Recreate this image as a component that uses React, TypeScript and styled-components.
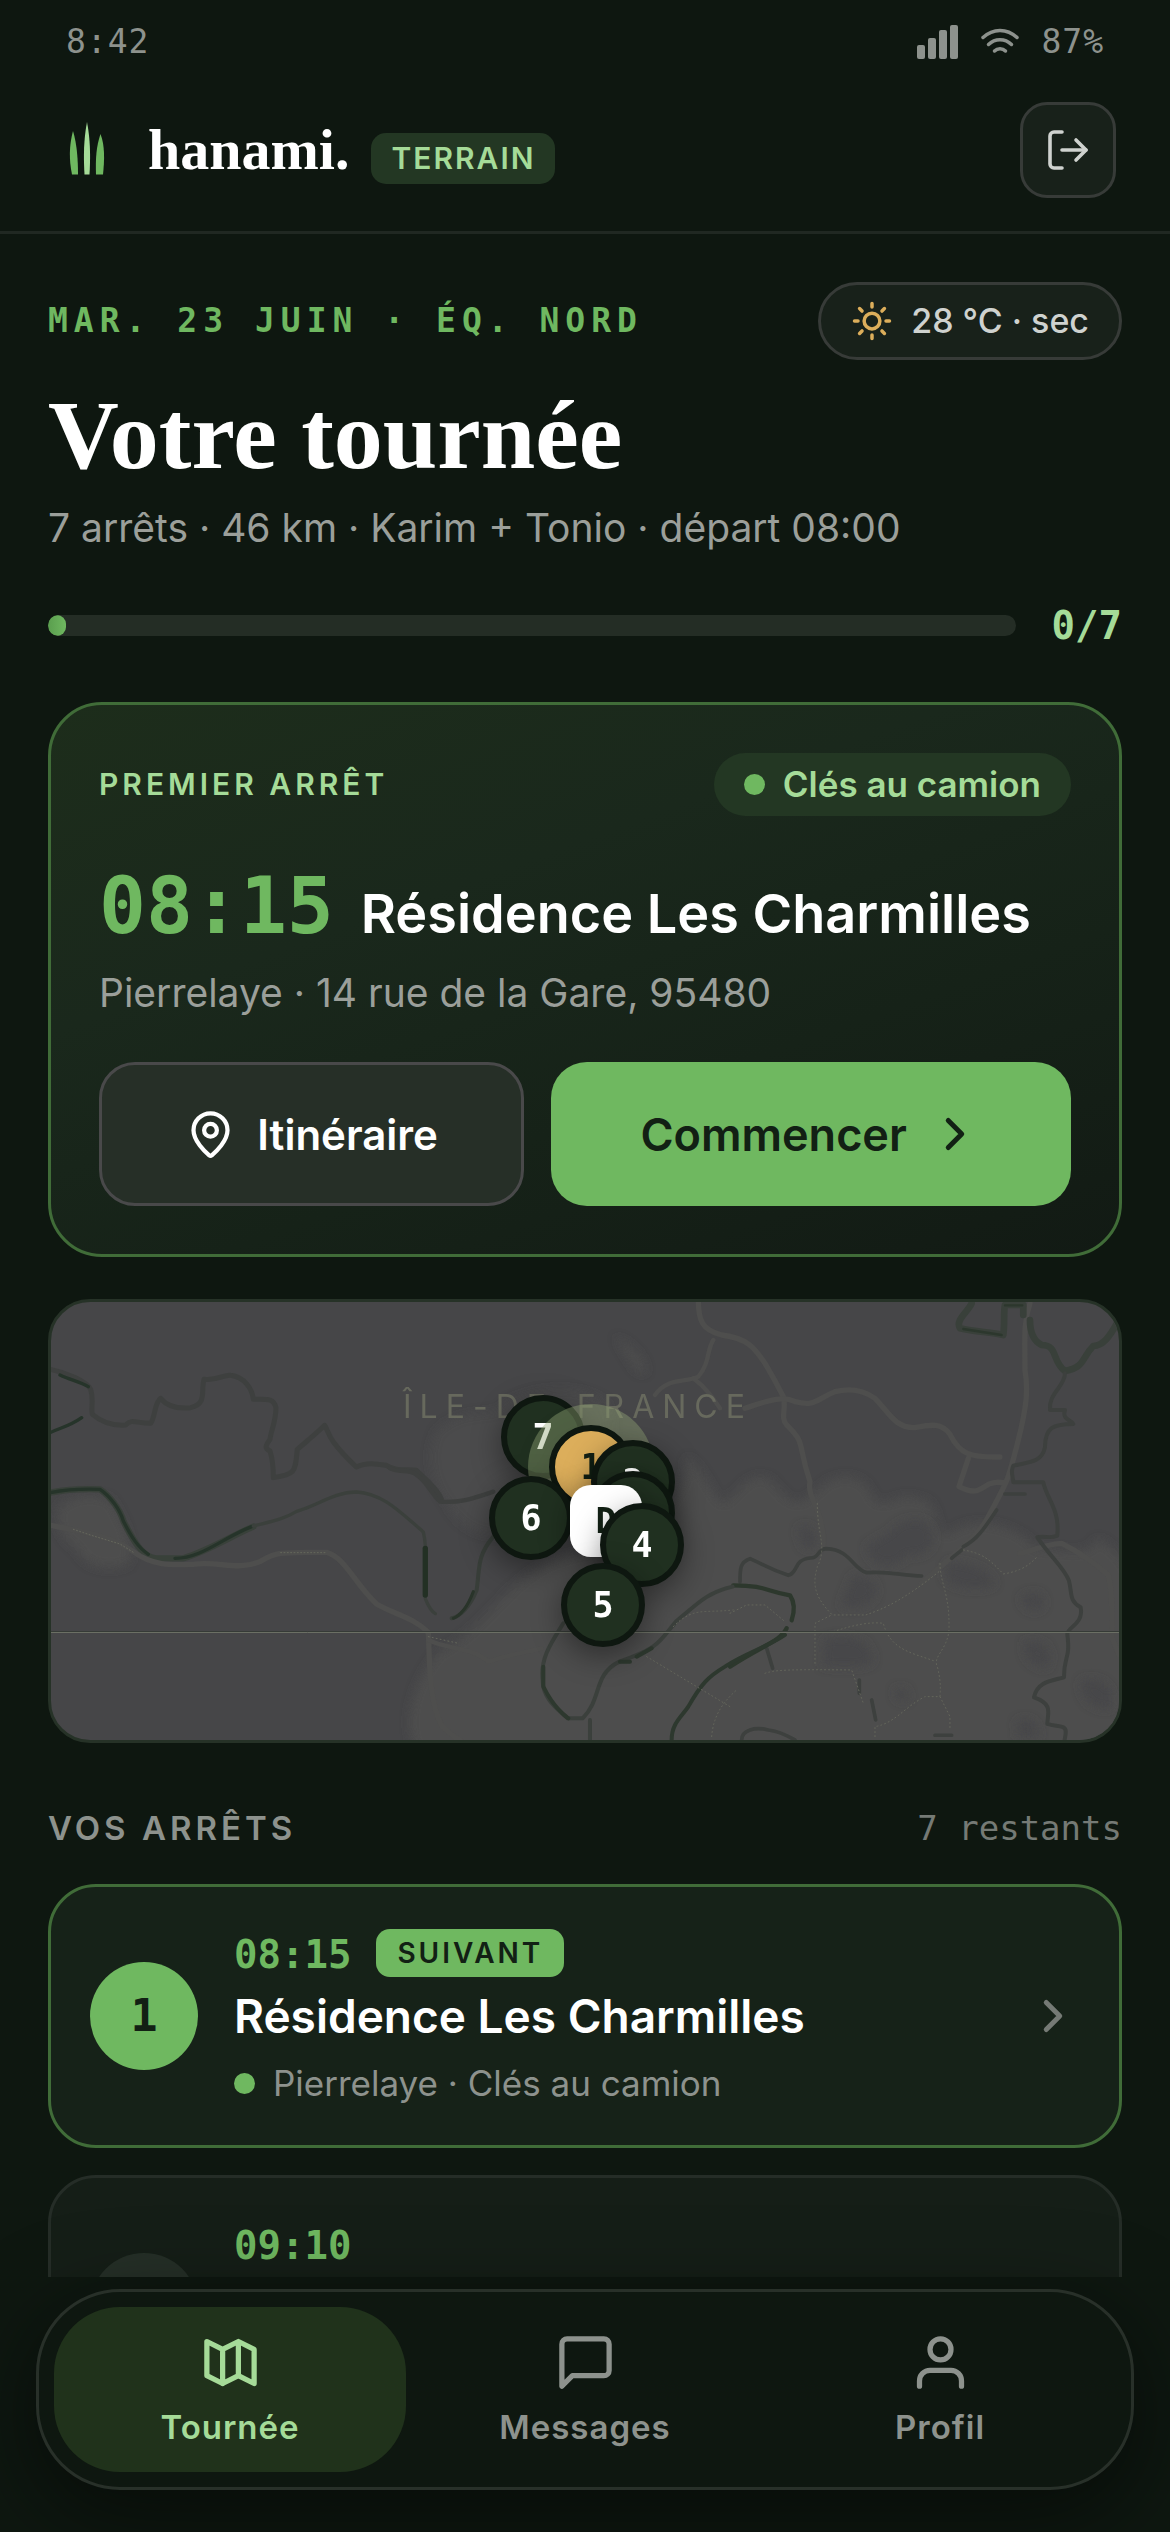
import React from "react";
import styled, { createGlobalStyle, css } from "styled-components";

const sans = `Inter, "Liberation Sans", sans-serif`;
const serif = `"Liberation Serif", serif`;
const mono = `"DejaVu Sans Mono", "Liberation Mono", monospace`;

const color = {
  page: "#0e1710",
  panel: "#162218",
  panelMuted: "#151e17",
  line: "#252d27",
  lineStrong: "#373b38",
  green: "#6fb860",
  greenLight: "#a5db98",
  greenLine: "#406c38",
  greenDeep: "#233723",
  ink: "#122014",
  white: "#ffffff",
  text: "#cfd2cf",
  soft: "#9b9f9a",
  muted: "#8d928d",
  faint: "#757a75",
  amber: "#dcae5b",
};

const GlobalStyle = createGlobalStyle`
  *, *::before, *::after { box-sizing: border-box; }
  body { margin: 0; background: ${color.page}; }
  button { font: inherit; color: inherit; border: 0; margin: 0; padding: 0; background: none; cursor: pointer; }
  h1, h2, h3, p, ul { margin: 0; padding: 0; }
  ul { list-style: none; }
  svg { display: block; flex: none; }
`;

const Screen = styled.div`
  display: flex;
  flex-direction: column;
  height: 100vh;
  overflow: hidden;
  background: ${color.page};
  color: ${color.white};
  font-family: ${sans};
`;

const StatusBar = styled.div`
  display: flex;
  justify-content: space-between;
  align-items: center;
  padding: 21px 66px 6px;
  color: ${color.muted};
  font: 400 33px/42px ${mono};
  letter-spacing: 1px;
`;

const StatusIcons = styled.div`
  display: flex;
  align-items: center;
  gap: 22px;
`;

const Header = styled.header`
  display: flex;
  justify-content: space-between;
  align-items: center;
  padding: 33px 54px;
  border-bottom: 3px solid #202822;
`;

const Brand = styled.div`
  display: flex;
  align-items: center;
  gap: 28px;
`;

const BrandText = styled.div`
  display: flex;
  align-items: baseline;
  gap: 22px;
`;

const Wordmark = styled.span`
  font: 700 58px/78px ${serif};
`;

const Tag = styled.span`
  padding: 9px 20px;
  border-radius: 15px;
  background: ${color.greenDeep};
  color: ${color.greenLight};
  font-size: 30px;
  font-weight: 600;
  line-height: 33px;
  letter-spacing: 2px;
`;

const IconButton = styled.button`
  display: flex;
  align-items: center;
  justify-content: center;
  width: 96px;
  height: 96px;
  border: 3px solid ${color.lineStrong};
  border-radius: 27px;
  background: #18211a;
  color: ${color.text};
`;

const Main = styled.main`
  flex: 1;
  min-height: 0;
  overflow: hidden;
  padding: 48px 48px 0;
`;

const SplitRow = styled.div`
  display: flex;
  justify-content: space-between;
  align-items: center;
`;

const DateLine = styled.p`
  color: ${color.green};
  font: 700 33px/42px ${mono};
  letter-spacing: 6px;
`;

const Weather = styled.div`
  display: flex;
  align-items: center;
  gap: 18px;
  height: 78px;
  padding: 0 30px;
  border: 3px solid ${color.lineStrong};
  border-radius: 39px;
  background: #18211a;
  color: ${color.text};
  font-size: 34px;
  font-weight: 500;
  line-height: 42px;
`;

const Title = styled.h1`
  margin-top: 24px;
  font: 700 98px/102px ${serif};
`;

const Summary = styled.p`
  margin-top: 15px;
  color: ${color.soft};
  font-size: 39px;
  line-height: 54px;
`;

const ProgressRow = styled.div`
  display: flex;
  align-items: center;
  gap: 36px;
  margin-top: 45px;
`;

const Track = styled.div`
  flex: 1;
  height: 21px;
  border-radius: 11px;
  background: #242d25;
  overflow: hidden;
`;

const Fill = styled.div`
  min-width: 18px;
  height: 21px;
  border-radius: 11px;
  background: linear-gradient(90deg, #5a9e4e, ${color.green});
`;

const Count = styled.span`
  color: ${color.greenLight};
  font: 700 39px/51px ${mono};
`;

const Hero = styled.section`
  margin-top: 51px;
  padding: 48px;
  border: 3px solid ${color.greenLine};
  border-radius: 54px;
  background: linear-gradient(160deg, #1d2d1b 0%, #1a281c 35%, #162218 65%, #121a14 100%);
`;

const Eyebrow = styled.h2<{ $size: number; $tone: string }>`
  color: ${(p) => p.$tone};
  font-size: ${(p) => p.$size}px;
  font-weight: 600;
  line-height: 51px;
  letter-spacing: 4px;
`;

const KeyBadge = styled.span`
  display: flex;
  align-items: center;
  gap: 18px;
  padding: 9px 30px;
  border-radius: 32px;
  background: ${color.greenDeep};
  color: ${color.greenLight};
  font-size: 35px;
  font-weight: 600;
  line-height: 45px;
`;

const Dot = styled.span`
  flex: none;
  width: 21px;
  height: 21px;
  border-radius: 50%;
  background: ${color.green};
`;

const HeroHeading = styled.div`
  display: flex;
  align-items: baseline;
  gap: 27px;
  height: 90px;
  margin-top: 51px;
`;

const HeroTime = styled.time`
  color: ${color.green};
  font: 700 78px/78px ${mono};
`;

const HeroName = styled.h3`
  font-size: 54px;
  font-weight: 600;
  line-height: 66px;
  white-space: nowrap;
`;

const Address = styled.p`
  margin-top: 9px;
  color: ${color.soft};
  font-size: 39px;
  line-height: 54px;
`;

const Actions = styled.div`
  display: grid;
  grid-template-columns: 9fr 11fr;
  gap: 27px;
  margin-top: 42px;
`;

const Action = styled.button<{ $primary?: boolean }>`
  display: flex;
  align-items: center;
  justify-content: center;
  gap: 21px;
  height: 144px;
  border-radius: 36px;
  font-size: 42px;
  font-weight: 600;
  ${(p) =>
    p.$primary
      ? css`
          background: ${color.green};
          color: ${color.ink};
          font-size: 45px;
        `
      : css`
          border: 3px solid #49494a;
          background: #262f27;
          color: ${color.white};
        `}
`;

const MapCard = styled.section`
  position: relative;
  height: 444px;
  margin-top: 42px;
  border: 3px solid #263227;
  border-radius: 42px;
  background: #464648;
  overflow: hidden;
`;

const Region = styled.span`
  position: absolute;
  top: 84px;
  left: calc(50% - 182px);
  color: #67695d;
  font-size: 32px;
  font-weight: 400;
  line-height: 42px;
  letter-spacing: 8px;
  white-space: nowrap;
`;

const Pin = styled.div<{ $x: number; $y: number; $kind: string }>`
  position: absolute;
  left: calc(50% + ${(p) => p.$x}px);
  top: ${(p) => p.$y}px;
  display: flex;
  align-items: center;
  justify-content: center;
  width: 84px;
  height: 84px;
  margin: -42px 0 0 -42px;
  border: 6px solid ${color.page};
  border-radius: 50%;
  background: #203020;
  box-shadow: 0 9px 30px rgba(0, 0, 0, 0.4);
  color: ${color.white};
  font: 700 35px/42px ${mono};
  ${(p) =>
    p.$kind === "next" &&
    css`
      background: ${color.amber};
      color: ${color.ink};
      box-shadow: 0 0 0 21px rgba(150, 170, 120, 0.4), 0 9px 30px rgba(0, 0, 0, 0.4);
    `}
  ${(p) =>
    p.$kind === "depot" &&
    css`
      width: 72px;
      height: 72px;
      margin: -36px 0 0 -36px;
      border: 0;
      border-radius: 21px;
      background: ${color.white};
      color: ${color.ink};
    `}
`;

const ListHead = styled.div`
  display: flex;
  justify-content: space-between;
  align-items: center;
  margin-top: 60px;
`;

const Remaining = styled.span`
  color: ${color.faint};
  font: 400 34px/51px ${mono};
`;

const StopList = styled.ul`
  display: flex;
  flex-direction: column;
  gap: 27px;
  margin-top: 30px;
`;

const Stop = styled.button<{ $next: boolean }>`
  display: flex;
  align-items: center;
  gap: 36px;
  width: 100%;
  padding: 39px;
  border: 3px solid ${(p) => (p.$next ? color.greenLine : color.line)};
  border-radius: 48px;
  background: ${(p) => (p.$next ? color.panel : color.panelMuted)};
  color: ${color.faint};
  text-align: left;
`;

const StopNumber = styled.span<{ $next: boolean }>`
  display: flex;
  flex: none;
  align-items: center;
  justify-content: center;
  width: 108px;
  height: 108px;
  border-radius: 50%;
  background: ${(p) => (p.$next ? color.green : "#252f27")};
  color: ${(p) => (p.$next ? color.ink : color.text)};
  font: 700 45px/54px ${mono};
`;

const StopBody = styled.span`
  display: flex;
  flex: 1;
  flex-direction: column;
`;

const StopTop = styled.span`
  display: flex;
  align-items: flex-end;
  gap: 25px;
  height: 51px;
`;

const StopTime = styled.time`
  color: ${color.green};
  font: 700 39px/45px ${mono};
`;

const NextTag = styled.span`
  align-self: flex-start;
  margin-top: 3px;
  padding: 6px 21px;
  border-radius: 14px;
  background: ${color.green};
  color: ${color.ink};
  font-size: 28px;
  font-weight: 600;
  line-height: 36px;
  letter-spacing: 3px;
`;

const StopName = styled.span`
  margin-top: 9px;
  color: ${color.white};
  font-size: 46px;
  font-weight: 600;
  line-height: 60px;
`;

const StopMeta = styled.span`
  display: flex;
  align-items: center;
  gap: 18px;
  margin-top: 15px;
  color: ${color.muted};
  font-size: 35px;
  line-height: 45px;
`;

const Dock = styled.div`
  position: relative;
  flex: none;
  padding: 12px 36px 42px;
`;

const TabBar = styled.nav`
  display: grid;
  grid-template-columns: repeat(3, 1fr);
  gap: 3px;
  padding: 15px;
  border: 3px solid #283029;
  border-radius: 84px;
  background: ${color.page};
  box-shadow: 0 24px 90px rgba(0, 0, 0, 0.5);
`;

const Tab = styled.button<{ $active?: boolean }>`
  display: flex;
  flex-direction: column;
  align-items: center;
  gap: 12px;
  padding: 24px 0;
  border-radius: 66px;
  background: ${(p) => (p.$active ? "#20321b" : "transparent")};
  color: ${(p) => (p.$active ? color.greenLight : color.muted)};
  font-size: 33px;
  font-weight: 600;
  line-height: 42px;
  letter-spacing: 1px;
`;

const Icon = ({ size, width = 2, children }: { size: number; width?: number; children: React.ReactNode }) => (
  <svg
    width={size}
    height={size}
    viewBox="0 0 24 24"
    fill="none"
    stroke="currentColor"
    strokeWidth={width}
    strokeLinecap="round"
    strokeLinejoin="round"
    aria-hidden="true"
  >
    {children}
  </svg>
);

const Chevron = ({ size }: { size: number }) => (
  <Icon size={size} width={2.2}>
    <path d="m9 18 6-6-6-6" />
  </Icon>
);

const Logo = () => (
  <svg width="66" height="78" viewBox="54 111 66 78" aria-hidden="true">
    <path d="M73 131C69 146 69 160 72 174.500h6C78 160 77 144 73 131Z" fill={color.green} />
    <path d="M87 122C83.500 140 83.500 158 84.500 174.500h5C90.500 158 90.500 140 87 122Z" fill={color.greenLight} />
    <path d="M100.500 134C96 147 95.500 160 96 174.500h7C104.500 160 105 146 100.500 134Z" fill={color.green} />
  </svg>
);

const Signal = () => (
  <svg width="42" height="34" viewBox="0 0 42 34" fill="currentColor" aria-hidden="true">
    <rect x="0" y="20" width="8" height="14" rx="2" />
    <rect x="11" y="13" width="8" height="21" rx="2" />
    <rect x="22" y="5" width="8" height="29" rx="2" />
    <rect x="33" y="0" width="8" height="34" rx="2" />
  </svg>
);

const Wifi = () => (
  <svg
    width="38"
    height="28"
    viewBox="0 0 38 28"
    fill="none"
    stroke="currentColor"
    strokeWidth="3.500"
    strokeLinecap="round"
    aria-hidden="true"
  >
    <path d="M2 9.500C12 0 26 0 36 9.500" />
    <path d="M7.500 16.500C14 10 24 10 30.500 16.500" />
    <path d="M13.500 23C16.500 20 21.500 20 24.500 23" />
  </svg>
);

const Terrain = () => (
  <svg width="100%" height="438" viewBox="0 0 1068 438" preserveAspectRatio="xMidYMid slice" fill="none" aria-hidden="true">
    <defs>
      <filter id="soft" x="-10%" y="-10%" width="120%" height="120%">
        <feGaussianBlur stdDeviation="5" />
      </filter>
    </defs>
    <g fill="#4e4e4d" filter="url(#soft)">
      <path d="M8 205c16-14 38-14 52-6 14 22 22 42 18 62-20 10-44 4-52-14C14 240 2 224 8 205Z" />
      <path d="M385 130c30-30 60-10 70-30 30-14 70-20 100 0 20 40-10 80-60 120-40 20-80 20-100-20-16-20-20-50-10-70Z" opacity=".5" />
      <path d="M388 350c60-30 70-90 150-100 60-10 100-60 98-95 26 20 30 60 44 40 12-10 20-25 38-18 20 20 24 34 50 10 16-16 38-16 50 0 10 30 30 0 48 10 30 0 10 50 40 30 20-12 60-4 80 20 30 0 50 10 60-10 24 10 40 40 40 60v170H385c-40-20-30-80 3-117Z" />
      <path d="M565 35c10 6 26 16 30 34-8 6-14-8-30-34Z" />
    </g>
    <g fill="#464648" filter="url(#soft)">
      <path d="M840 230c10-14 34-16 40-4 8 20-8 30-24 26-14 20-40 10-40-8ZM802 274c14-2 26 6 22 20-10 14-26 12-34 10ZM896 260c20 0 44 8 48 22-16 8-40 4-50-6ZM774 338c16-6 36-2 42 6 4 10 10 12 2 18-14 4-34 2-46 2ZM970 296c12-8 24-6 22 8-8 8-18 4-22-8ZM974 340c20-4 30 10 22 26-16-2-24-12-22-26ZM748 226c12-6 20 4 16 18-10 8-16-4-16-18ZM844 388c8-4 16 0 12 10-8 2-12-2-12-10ZM966 420c8-6 22-2 22 16h-20Z" />
      <path d="M1030 380c14-6 24 0 30 10v16c-14 2-30-6-30-26Z" />
    </g>

    <g transform="translate(-11 -12) scale(.3333)" strokeLinejoin="round" strokeLinecap="round">
      <path
        d="M30 238c50 10 110 35 122 60 10 30 0 60 5 75 30 25 60 35 100 32 20-20 30-5 75-5 15-20 10-60 30-75 20 25 50 32 90 28 50-10 30-50 40-85 40 5 60-15 80-12 40 5 65 40 68 72 40 0 60-5 68 25 0 40-15 70-18 95-10 15-20 25 0 35 10 30 10 60 10 80 70-10 65-20 72-85 30-25 60-50 82-72 15 20 0 35 95 125 30-15 60-10 90-5 30 20 60 10 90 15 20 20 60 50 75 85"
        stroke="#3e403f"
        strokeWidth="15"
      />
      <path d="M30 608c50-10 100-12 150-10 30 20 60 60 70 95 30 60 60 112 100 112h80c80-25 140-65 210-95" stroke="#39413a" strokeWidth="19" />
      <path d="M30 608c50-10 100-12 150-10 30 20 60 60 70 95 25 50 45 80 75 100M405 805c80 0 140-60 230-95M30 428c40-18 60-20 95-45M60 255c30 15 60 20 85 35" stroke="#26342a" strokeWidth="10" />
      <path d="M640 708c60-15 90-20 130-44 60-15 110-58 180-58 80 5 130 60 200 120 10 40 5 60 6 200 10 25 20 40 30 45" stroke="#3b403c" strokeWidth="10" />
      <path d="M1156 775v140" stroke="#233024" strokeWidth="16" />
      <path d="M30 705c90 20 180 30 250 80 60 45 120 40 180 38 80-10 130 20 200-8 50-30 60-28 200-28 60 20 80 90 150 155 50 30 110 40 155 85 5 90 0 200 40 280 60 60 120 80 180 110" stroke="#4e4e4d" strokeWidth="16" />
      <path d="M100 718l60 20 80 24 40 25M722 788h135" stroke="#64665b" strokeWidth="3" strokeDasharray="3 7" />
    </g>

    <g transform="translate(679 -12) scale(.3333)" strokeLinejoin="round" strokeLinecap="round">
      <path d="M-95 30c0 60 10 90 70 105 80 10 100 40 130 85 30 50 40 70 55 100 10 40-10 60 10 85 60 60 30 50 70 170-10 50 40 80 40 190" stroke="#4e4e4d" strokeWidth="16" />
      <path d="M45 355c60-20 110-40 150-20 60 15 60-5 120-30 40-10 80-8 120 20 40 40 60 90 120 88 50-10 80-15 105 20 30 60 60 70 150 68M715 505c-10 30-20 60-28 85 50 25 60 10 90-8 20-6 25-6 45-4M900 40c-20 60-15 100-15 200 10 60 5 110-20 210-30 120-30 120-90 230-30 60-100 110-200 200M870 790c20 0 80-30 125-30 60 30 100 60 140 95 15 60 10 130 12 190l20 50" stroke="#4e4e4d" strokeWidth="16" />
      <path d="M725 40c-10 25-50 50-35 75 50 12 90 10 130 20 5-40 0-70 5-90h55v30M900 90c0 30 5 60 35 75 50 0 30 50 70 78 60-10 50-40 85-75 30 0 50-30 72-70" stroke="#39403a" strokeWidth="20" />
      <path d="M825 46h52M700 117l115 18" stroke="#2c372d" strokeWidth="7" />
      <path d="M1005 250c0 40-50 60-45 110h45c-10 30 20 30 25 42-60 0-85 10-85 70-10 50-60 45-95 55-10 20 0 35 0 50h90c10 50 50 80 42 160-20 10-40 0-60 5 40 60 80 90 95 130 10 40 0 60 35 80 10 50-40 60-40 80 10 80-10 60-10 130-30 10-80 10-90 60 60 20 40 50 40 80 30 10 60 0 55 30l-5 30" stroke="#3d403e" strokeWidth="12" />
      <path d="M825 612h60M700 770c40-20 60-50 100-110M665 805c10-10 20-15 30-25M575 858c-60 0-90-15-165-10-40-10-50-70-120-72-30 0-20 30-50 28-50 5-35 45-65 52-60-20-70-30-115-50-30 10-30 30-30 70M35 1350c0-30 40-40 80-30 40 5 60 20 80 30M110 1075l18 60M388 1170v40M425 1230l12 60M615 1336h50" stroke="#3d403e" strokeWidth="11" />
      <path d="M10 886c100 0 100 20 170 30 20 30 10 60 5 75M170 1015c-20 40-70 50-170 115" stroke="#2d382d" strokeWidth="13" />
      <g stroke="#64665b" strokeWidth="3" strokeDasharray="3 9">
        <path d="M262 640c0 100 30 130 0 190-10 40-20 80 45 145h100c60-20 120-50 220-130M0 970l50-25h55l60 50M255 1120V1000l50-25M310 1025c60-20 110-30 150-25 20 80 90 90 150 112M630 820c0 60 30 90 27 200-5 60-50 80-35 110 10 40 10 60 8 90M700 780c60 10 80 30 120 72 60-10 80-30 100-50M105 1150c30-10 60-12 260-10l35 100M435 1340v-30c60-10 90-60 150-90h45l30 60v40" />
      </g>
    </g>

    <g transform="translate(339 -12) scale(.3333)" strokeLinejoin="round" strokeLinecap="round">
      <path d="M970 150c-20 30-10 70-45 110-40 20-90 0-130 55M910 265c40 30 60 60 80 90M115 1050c60 30 130 20 180 65 60-20 120-30 160-40" stroke="#4e4e4d" strokeWidth="13" />
      <path d="M0 535c30 15 60 0 80 20 30 20 40 50 70 80 60 5 100-10 160-30" stroke="#3e403f" strokeWidth="13" />
      <path d="M310 740c-50 60-40 90-50 160-20 50-50 80-75 85" stroke="#383e39" strokeWidth="12" />
      <path d="M250 905c-15 40-35 70-60 80" stroke="#29342a" strokeWidth="9" />
      <path d="M520 1000c-30 50-70 100-62 170 0 60 50 90 75 115h45c60-60 30-130 110-170 120-40 120-60 170-120 70-60 100-90 170-105M600 1290v60" stroke="#3b403c" strokeWidth="12" />
      <path d="M845 1350c0-50 30-70 50-100 40-70 60-90 110-120 60-40 130-60 180-95M460 1130v60c20 40 40 70 75 95M740 1100l45-25M690 1115h30" stroke="#2d382e" strokeWidth="12" />
      <g stroke="#64665b" strokeWidth="3" strokeDasharray="3 9">
        <path d="M770 1100l150 90 100 60M850 1010c60-60 90-40 180-50M965 1340c5-60 30-100 75-140M115 1040l90 20" />
      </g>
    </g>
    <path d="M0 329.500h1068" stroke="#363b37" strokeWidth="1" />
    <path d="M0 330.500h1068" stroke="#6b6f64" strokeWidth="1" />
  </svg>
);

const pins = [
  { label: "7", x: -42, y: 135, kind: "stop" },
  { label: "1", x: 6, y: 165, kind: "next" },
  { label: "2", x: 48, y: 180, kind: "stop" },
  { label: "3", x: 48, y: 211, kind: "stop" },
  { label: "6", x: -54, y: 216, kind: "stop" },
  { label: "D", x: 21, y: 219, kind: "depot" },
  { label: "4", x: 57, y: 243, kind: "stop" },
  { label: "5", x: 18, y: 303, kind: "stop" },
];

const stops = [
  { time: "08:15", name: "Résidence Les Charmilles", meta: "Pierrelaye · Clés au camion", next: true },
  { time: "09:10", name: "", meta: "", next: false },
];

export default function App() {
  return (
    <Screen>
      <GlobalStyle />
      <StatusBar>
        <span>8:42</span>
        <StatusIcons>
          <Signal />
          <Wifi />
          <span>87%</span>
        </StatusIcons>
      </StatusBar>

      <Header>
        <Brand>
          <Logo />
          <BrandText>
            <Wordmark>hanami.</Wordmark>
            <Tag>TERRAIN</Tag>
          </BrandText>
        </Brand>
        <IconButton type="button" aria-label="Se déconnecter">
          <Icon size={48} width={1.8}>
            <path d="M9 21H5a2 2 0 0 1-2-2V5a2 2 0 0 1 2-2h4" />
            <path d="m16 17 5-5-5-5" />
            <path d="M21 12H9" />
          </Icon>
        </IconButton>
      </Header>

      <Main>
        <SplitRow>
          <DateLine>MAR. 23 JUIN · ÉQ. NORD</DateLine>
          <Weather>
            <svg
              width="42"
              height="42"
              viewBox="0 0 24 24"
              fill="none"
              stroke={color.amber}
              strokeWidth="2"
              strokeLinecap="round"
              aria-hidden="true"
            >
              <circle cx="12" cy="12" r="4.500" />
              <path d="M12 2v2M12 20v2M2 12h2M20 12h2M4.900 4.900l1.400 1.400M17.700 17.700l1.400 1.400M4.900 19.100l1.400-1.400M17.700 6.300l1.400-1.400" />
            </svg>
            28 °C · sec
          </Weather>
        </SplitRow>

        <Title>Votre tournée</Title>
        <Summary>7 arrêts · 46 km · Karim + Tonio · départ 08:00</Summary>

        <ProgressRow>
          <Track role="progressbar" aria-label="Progression" aria-valuemin={0} aria-valuemax={7} aria-valuenow={0}>
            <Fill style={{ width: `${(0 / 7) * 100}%` }} />
          </Track>
          <Count>0/7</Count>
        </ProgressRow>

        <Hero>
          <SplitRow>
            <Eyebrow $size={30} $tone={color.greenLight}>PREMIER ARRÊT</Eyebrow>
            <KeyBadge>
              <Dot />
              Clés au camion
            </KeyBadge>
          </SplitRow>
          <HeroHeading>
            <HeroTime>08:15</HeroTime>
            <HeroName>Résidence Les Charmilles</HeroName>
          </HeroHeading>
          <Address>Pierrelaye · 14 rue de la Gare, 95480</Address>
          <Actions>
            <Action type="button">
              <Icon size={51}>
                <path d="M20 10c0 5-5.500 10.200-7.400 11.800a1 1 0 0 1-1.200 0C9.500 20.200 4 15 4 10a8 8 0 0 1 16 0" />
                <circle cx="12" cy="10" r="3" />
              </Icon>
              Itinéraire
            </Action>
            <Action type="button" $primary>
              Commencer
              <Chevron size={54} />
            </Action>
          </Actions>
        </Hero>

        <MapCard aria-label="Carte de la tournée">
          <Terrain />
          <Region>ÎLE-DE-FRANCE</Region>
          {pins.map((pin) => (
            <Pin key={pin.label} $x={pin.x} $y={pin.y} $kind={pin.kind}>
              {pin.label}
            </Pin>
          ))}
        </MapCard>

        <ListHead>
          <Eyebrow $size={33} $tone={color.muted}>VOS ARRÊTS</Eyebrow>
          <Remaining>7 restants</Remaining>
        </ListHead>

        <StopList>
          {stops.map((stop, index) => (
            <li key={stop.time}>
              <Stop type="button" $next={stop.next}>
                <StopNumber $next={stop.next}>{stop.next ? index + 1 : ""}</StopNumber>
                <StopBody>
                  <StopTop>
                    <StopTime>{stop.time}</StopTime>
                    {stop.next && <NextTag>SUIVANT</NextTag>}
                  </StopTop>
                  <StopName>{stop.name || "\u00a0"}</StopName>
                  <StopMeta>
                    {stop.meta && <Dot />}
                    {stop.meta || "\u00a0"}
                  </StopMeta>
                </StopBody>
                <Chevron size={54} />
              </Stop>
            </li>
          ))}
        </StopList>
      </Main>

      <Dock>
        <TabBar aria-label="Navigation">
          <Tab type="button" $active aria-current="page">
            <Icon size={63}>
              <path d="m3 4 6 3 6-3 6 3v13l-6-3-6 3-6-3ZM9 7v13M15 4v13" />
            </Icon>
            Tournée
          </Tab>
          <Tab type="button">
            <Icon size={63}>
              <path d="M21 15a2 2 0 0 1-2 2H7l-4 4V5a2 2 0 0 1 2-2h14a2 2 0 0 1 2 2z" />
            </Icon>
            Messages
          </Tab>
          <Tab type="button">
            <Icon size={63}>
              <path d="M20 21v-2a4 4 0 0 0-4-4H8a4 4 0 0 0-4 4v2" />
              <circle cx="12" cy="7" r="4" />
            </Icon>
            Profil
          </Tab>
        </TabBar>
      </Dock>
    </Screen>
  );
}
